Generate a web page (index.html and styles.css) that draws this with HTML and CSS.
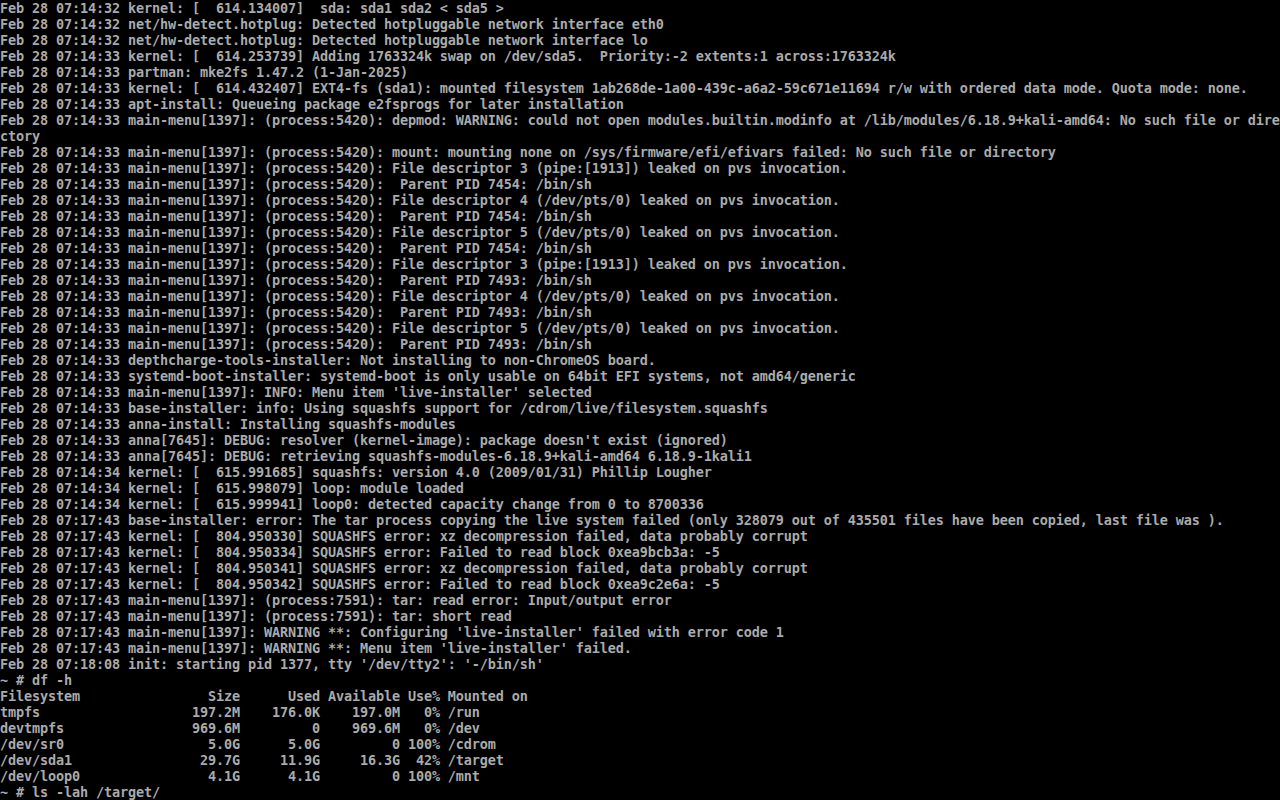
FILE: index.html
```html
<!DOCTYPE html>
<html>
<head>
<meta charset="utf-8">
<link rel="stylesheet" href="styles.css">
</head>
<body>
<pre class="console">Feb 28 07:14:32 kernel: [  614.134007]  sda: sda1 sda2 &lt; sda5 &gt;
Feb 28 07:14:32 net/hw-detect.hotplug: Detected hotpluggable network interface eth0
Feb 28 07:14:32 net/hw-detect.hotplug: Detected hotpluggable network interface lo
Feb 28 07:14:33 kernel: [  614.253739] Adding 1763324k swap on /dev/sda5.  Priority:-2 extents:1 across:1763324k
Feb 28 07:14:33 partman: mke2fs 1.47.2 (1-Jan-2025)
Feb 28 07:14:33 kernel: [  614.432407] EXT4-fs (sda1): mounted filesystem 1ab268de-1a00-439c-a6a2-59c671e11694 r/w with ordered data mode. Quota mode: none.
Feb 28 07:14:33 apt-install: Queueing package e2fsprogs for later installation
Feb 28 07:14:33 main-menu[1397]: (process:5420): depmod: WARNING: could not open modules.builtin.modinfo at /lib/modules/6.18.9+kali-amd64: No such file or dire
ctory
Feb 28 07:14:33 main-menu[1397]: (process:5420): mount: mounting none on /sys/firmware/efi/efivars failed: No such file or directory
Feb 28 07:14:33 main-menu[1397]: (process:5420): File descriptor 3 (pipe:[1913]) leaked on pvs invocation.
Feb 28 07:14:33 main-menu[1397]: (process:5420):  Parent PID 7454: /bin/sh
Feb 28 07:14:33 main-menu[1397]: (process:5420): File descriptor 4 (/dev/pts/0) leaked on pvs invocation.
Feb 28 07:14:33 main-menu[1397]: (process:5420):  Parent PID 7454: /bin/sh
Feb 28 07:14:33 main-menu[1397]: (process:5420): File descriptor 5 (/dev/pts/0) leaked on pvs invocation.
Feb 28 07:14:33 main-menu[1397]: (process:5420):  Parent PID 7454: /bin/sh
Feb 28 07:14:33 main-menu[1397]: (process:5420): File descriptor 3 (pipe:[1913]) leaked on pvs invocation.
Feb 28 07:14:33 main-menu[1397]: (process:5420):  Parent PID 7493: /bin/sh
Feb 28 07:14:33 main-menu[1397]: (process:5420): File descriptor 4 (/dev/pts/0) leaked on pvs invocation.
Feb 28 07:14:33 main-menu[1397]: (process:5420):  Parent PID 7493: /bin/sh
Feb 28 07:14:33 main-menu[1397]: (process:5420): File descriptor 5 (/dev/pts/0) leaked on pvs invocation.
Feb 28 07:14:33 main-menu[1397]: (process:5420):  Parent PID 7493: /bin/sh
Feb 28 07:14:33 depthcharge-tools-installer: Not installing to non-ChromeOS board.
Feb 28 07:14:33 systemd-boot-installer: systemd-boot is only usable on 64bit EFI systems, not amd64/generic
Feb 28 07:14:33 main-menu[1397]: INFO: Menu item 'live-installer' selected
Feb 28 07:14:33 base-installer: info: Using squashfs support for /cdrom/live/filesystem.squashfs
Feb 28 07:14:33 anna-install: Installing squashfs-modules
Feb 28 07:14:33 anna[7645]: DEBUG: resolver (kernel-image): package doesn't exist (ignored)
Feb 28 07:14:33 anna[7645]: DEBUG: retrieving squashfs-modules-6.18.9+kali-amd64 6.18.9-1kali1
Feb 28 07:14:34 kernel: [  615.991685] squashfs: version 4.0 (2009/01/31) Phillip Lougher
Feb 28 07:14:34 kernel: [  615.998079] loop: module loaded
Feb 28 07:14:34 kernel: [  615.999941] loop0: detected capacity change from 0 to 8700336
Feb 28 07:17:43 base-installer: error: The tar process copying the live system failed (only 328079 out of 435501 files have been copied, last file was ).
Feb 28 07:17:43 kernel: [  804.950330] SQUASHFS error: xz decompression failed, data probably corrupt
Feb 28 07:17:43 kernel: [  804.950334] SQUASHFS error: Failed to read block 0xea9bcb3a: -5
Feb 28 07:17:43 kernel: [  804.950341] SQUASHFS error: xz decompression failed, data probably corrupt
Feb 28 07:17:43 kernel: [  804.950342] SQUASHFS error: Failed to read block 0xea9c2e6a: -5
Feb 28 07:17:43 main-menu[1397]: (process:7591): tar: read error: Input/output error
Feb 28 07:17:43 main-menu[1397]: (process:7591): tar: short read
Feb 28 07:17:43 main-menu[1397]: WARNING **: Configuring 'live-installer' failed with error code 1
Feb 28 07:17:43 main-menu[1397]: WARNING **: Menu item 'live-installer' failed.
Feb 28 07:18:08 init: starting pid 1377, tty '/dev/tty2': '-/bin/sh'
~ # df -h
Filesystem                Size      Used Available Use% Mounted on
tmpfs                   197.2M    176.0K    197.0M   0% /run
devtmpfs                969.6M         0    969.6M   0% /dev
/dev/sr0                  5.0G      5.0G         0 100% /cdrom
/dev/sda1                29.7G     11.9G     16.3G  42% /target
/dev/loop0                4.1G      4.1G         0 100% /mnt
~ # ls -lah /target/</pre>
</body>
</html>
```

FILE: styles.css
```css
html, body {
  margin: 0;
  padding: 0;
  background: #000000;
  width: 1280px;
  height: 800px;
  overflow: hidden;
}

.console {
  margin: 0;
  padding: 0;
  font-family: "DejaVu Sans Mono", monospace;
  font-size: 13.5px;
  font-weight: bold;
  letter-spacing: -0.13px;
  line-height: 16px;
  color: #aaaaaa;
  white-space: pre;
  overflow: hidden;
  width: 1280px;
  height: 800px;
}
```
